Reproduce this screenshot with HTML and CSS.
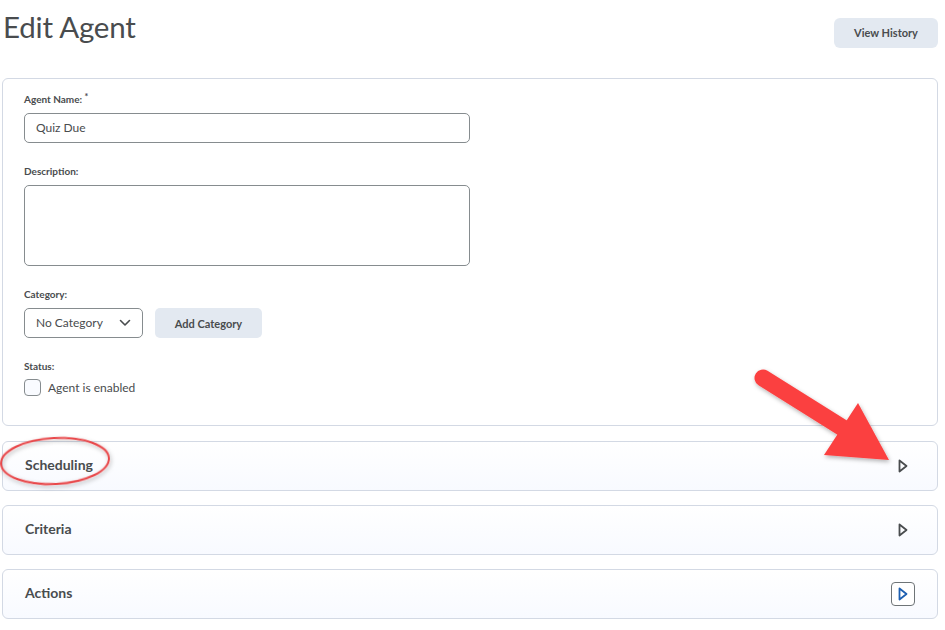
FILE: index.html
```html
<!DOCTYPE html>
<html>
<head>
<meta charset="utf-8">
<link rel="stylesheet" href="styles.css">
</head>
<body>
<div class="page">
  <header class="top">
    <h1 class="title">Edit Agent</h1>
    <button class="btn btn-history">View History</button>
  </header>

  <section class="card">
    <div class="field">
      <label class="lbl">Agent Name: <span class="req">*</span></label>
      <div class="input">Quiz Due</div>
    </div>
    <div class="field">
      <label class="lbl">Description:</label>
      <div class="textarea"></div>
    </div>
    <div class="field">
      <label class="lbl">Category:</label>
      <div class="row">
        <div class="select">No Category
          <svg class="chev" width="12" height="8" viewBox="0 0 12 8"><path d="M1.5 1.5 L6 6 L10.5 1.5" fill="none" stroke="#494c4e" stroke-width="1.6" stroke-linecap="round" stroke-linejoin="round"/></svg>
        </div>
        <button class="btn btn-add">Add Category</button>
      </div>
    </div>
    <div class="field last">
      <label class="lbl">Status:</label>
      <div class="check-row">
        <span class="checkbox"></span>
        <span class="check-text">Agent is enabled</span>
      </div>
    </div>
  </section>

  <section class="panel">
    <span class="panel-title">Scheduling</span>
    <span class="tri"><svg width="10" height="14" viewBox="0 0 10 14"><path d="M1.5 1.5 L8.5 7 L1.5 12.5 Z" fill="none" stroke="#494c4e" stroke-width="1.8" stroke-linejoin="round"/></svg></span>
  </section>
  <section class="panel">
    <span class="panel-title">Criteria</span>
    <span class="tri"><svg width="10" height="14" viewBox="0 0 10 14"><path d="M1.5 1.5 L8.5 7 L1.5 12.5 Z" fill="none" stroke="#494c4e" stroke-width="1.8" stroke-linejoin="round"/></svg></span>
  </section>
  <section class="panel">
    <span class="panel-title">Actions</span>
    <span class="tri focus"><svg width="10" height="14" viewBox="0 0 10 14"><path d="M1.5 1.5 L8.5 7 L1.5 12.5 Z" fill="none" stroke="#1d5fb1" stroke-width="1.8" stroke-linejoin="round"/></svg></span>
  </section>

  <svg class="annot" width="945" height="630" viewBox="0 0 945 630">
    <defs>
      <filter id="sh" x="-20%" y="-20%" width="140%" height="140%">
        <feDropShadow dx="1" dy="2" stdDeviation="2" flood-color="#000" flood-opacity="0.3"/>
      </filter>
    </defs>
    <ellipse cx="55" cy="461" rx="54" ry="23" fill="none" stroke="#e8474a" stroke-width="2" filter="url(#sh)" transform="rotate(-3 55 461)"/>
    <g filter="url(#sh)">
      <line x1="763" y1="378" x2="846" y2="430" stroke="#fb4141" stroke-width="17" stroke-linecap="round"/>
      <polygon points="858,403 889,460 824,455" fill="#fb4141"/>
    </g>
  </svg>
</div>
</body>
</html>
```

FILE: styles.css
```css
* { box-sizing: border-box; }
html, body { margin: 0; padding: 0; background: #fff; }
body { font-family: Lato, "Open Sans", sans-serif; color: #494c4e; }
.page { position: relative; width: 945px; height: 630px; overflow: hidden; padding: 0 7px 0 2px; }

.top { display: flex; justify-content: space-between; align-items: flex-start; height: 78px; }
.title { margin: 8px 0 0 1px; font-size: 29.5px; font-weight: 400; line-height: 37px; color: #494c4e; letter-spacing: -0.2px; }

.btn { font-family: Lato, sans-serif; font-weight: 700; font-size: 11px; color: #494c4e; background: #e3e9f1; border: none; border-radius: 6px; padding: 0; }
.btn-history { margin-top: 18px; width: 104px; height: 30px; padding-bottom: 2px; }

.card { border: 1px solid #d3d9e4; border-radius: 6px; padding: 14px 21px 28px; height: 348px; margin-bottom: 15px; }
.field { margin-bottom: 22px; }
.field.last { margin-bottom: 0; }
.lbl { display: block; font-size: 10px; font-weight: 700; line-height: 13px; margin-bottom: 7px; color: #494c4e; }
.req { position: relative; top: -3px; font-size: 9px; }
.input { width: 446px; height: 30px; border: 1px solid #868c8f; border-radius: 5px; padding: 0 11px; font-size: 12px; line-height: 27px; color: #494c4e; }
.textarea { width: 446px; height: 81px; border: 1px solid #868c8f; border-radius: 5px; }
.row { display: flex; gap: 12px; }
.select { position: relative; width: 119px; height: 30px; border: 1px solid #868c8f; border-radius: 5px; padding: 0 11px; font-size: 12px; line-height: 28px; display: flex; justify-content: space-between; align-items: center; }
.btn-add { width: 107px; height: 30px; border-radius: 5px; }
.check-row { display: flex; align-items: center; gap: 7px; margin-top: -1px; }
.checkbox { width: 17px; height: 17px; border: 1px solid #868c8f; border-radius: 4px; background: #f9fbff; }
.check-text { font-size: 12px; color: #494c4e; }

.panel { margin-bottom: 14px; height: 50px; border: 1px solid #d3d9e4; border-radius: 6px; background: linear-gradient(#fff, #f8faff); display: flex; justify-content: space-between; align-items: center; padding: 0 22px; }
.panel-title { font-size: 14px; font-weight: 700; color: #494c4e; margin-top: -3px; }
.tri { width: 24px; height: 24px; display: flex; align-items: center; justify-content: center; border-radius: 4px; border: 1px solid transparent; }
.tri.focus { border: 1px solid #6e7477; background: #fff; }

.annot { position: absolute; left: 0; top: 0; pointer-events: none; }
```
